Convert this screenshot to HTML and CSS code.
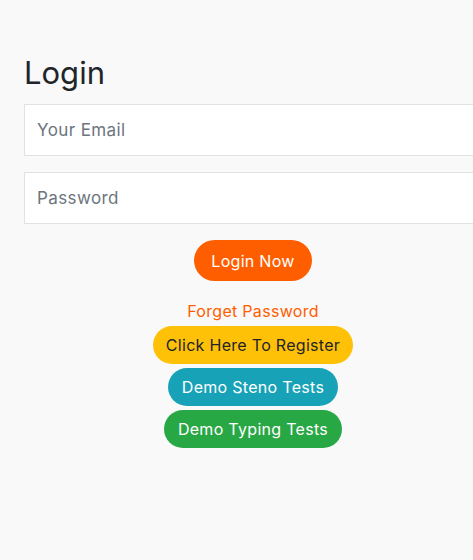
FILE: index.html
```html
<!DOCTYPE html>
<html>
<head>
<meta charset="utf-8">
<link rel="stylesheet" href="styles.css">
</head>
<body>
<div class="page">
  <form class="login">
    <h2 class="title">Login</h2>
    <input class="field" type="email" placeholder="Your Email">
    <input class="field" type="password" placeholder="Password">
    <div class="actions">
      <button type="button" class="btn btn-login">Login Now</button>
      <a class="forgot" href="#">Forget Password</a>
      <a class="btn btn-register" href="#">Click Here To Register</a>
      <a class="btn btn-steno" href="#">Demo Steno Tests</a>
      <a class="btn btn-typing" href="#">Demo Typing Tests</a>
    </div>
  </form>
</div>
</body>
</html>
```
FILE: styles.css
```css
html, body {
  margin: 0;
  padding: 0;
  background: #f9f9f9;
  overflow: hidden;
}
body {
  font-family: Inter, "Open Sans", sans-serif;
  color: #212529;
}
.page {
  padding: 52px 0 0 24px;
}
.login {
  width: 458px;
  display: flex;
  flex-direction: column;
}
.title {
  margin: 0 0 10px 0;
  font-weight: 400;
  font-size: 31px;
  line-height: 42px;
  color: #212529;
}
.field {
  box-sizing: border-box;
  height: 52px;
  border: 1px solid #e2e2e2;
  background: #fff;
  padding: 0 12px;
  font-family: inherit;
  font-size: 17px;
  letter-spacing: 0.4px;
  margin: 0 0 16px 0;
  outline: none;
}
.field::placeholder {
  color: #6c757d;
}
.actions {
  display: flex;
  flex-direction: column;
  align-items: center;
}
.btn {
  display: inline-flex;
  align-items: center;
  justify-content: center;
  border: none;
  border-radius: 22px;
  font-family: inherit;
  font-size: 16px;
  letter-spacing: 0.3px;
  text-decoration: none;
  color: #fff;
  padding: 0 14px;
  height: 38px;
  margin-bottom: 4px;
}
.btn-login {
  background: #ff5e00;
  height: 41px;
  padding: 0 17px;
  margin-bottom: 0;
}
.forgot {
  margin-top: 20px;
  color: #ff5e00;
  font-size: 16px;
  letter-spacing: 0.3px;
  text-decoration: none;
  line-height: 20px;
  margin-bottom: 5px;
}
.btn-register {
  background: #ffc107;
  color: #212529;
  padding: 0 13px;
}
.btn-steno {
  background: #17a2b8;
}
.btn-typing {
  background: #28a745;
}
```
